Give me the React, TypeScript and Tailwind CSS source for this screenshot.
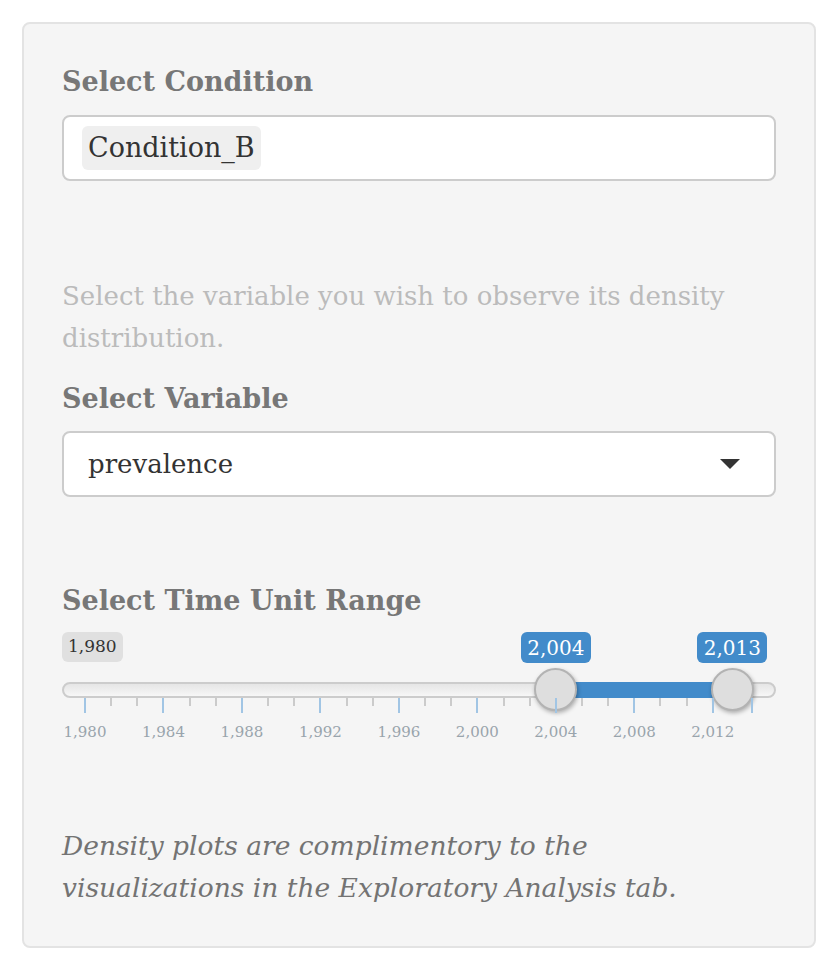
const serif = "font-['DejaVu_Serif',serif]";

const MIN = 1980;
const MAX = 2014;
const FROM = 2004;
const TO = 2013;
const YEAR_PX = 667 / (MAX - MIN);
const pos = (v: number) => 23 + (v - MIN) * YEAR_PX;

const majors = [1980, 1984, 1988, 1992, 1996, 2000, 2004, 2008, 2012];
const minors = majors.slice(0, -1).flatMap(m => [m + 4 / 3, m + 8 / 3]);

function Label({ children }: { children: React.ReactNode }) {
  return <div className="h-[40px] text-[27px] font-bold leading-[40px] text-[#777]">{children}</div>;
}

function RangeSlider() {
  return (
    <div className="flex flex-col pt-[11px]">
      {/* labels above the track */}
      <div className="relative h-[31px]">
        <span className="inline-flex h-[30px] items-center rounded-[6px] bg-[#e0e0e0] px-[6px] text-[17px] text-[#333]">
          1,980
        </span>
        {[FROM, TO].map(v => (
          <div
            key={v}
            className="absolute top-0 flex h-[31px] w-[70px] items-center justify-center rounded-[6px] bg-[#428bca] text-[20px] text-white"
            style={{ left: pos(v) - 35 }}
          >
            {v.toLocaleString("en-US")}
          </div>
        ))}
      </div>

      {/* track, bar, handles */}
      <div className="relative mt-[19px] h-[16px]">
        <div className="h-full rounded-full border-2 border-[#ccc] bg-[linear-gradient(to_bottom,#ddd_-50%,#fff_150%)]" />
        <div
          className="absolute top-0 h-[16px] bg-[#428bca]"
          style={{ left: pos(FROM), width: pos(TO) - pos(FROM) }}
        />
        {[FROM, TO].map(v => (
          <div
            key={v}
            className="absolute top-[-14px] h-[43px] w-[43px] rounded-full border-2 border-[#b3b3b3] bg-[#dedede] shadow-[1px_2px_4px_rgba(0,0,0,0.3)]"
            style={{ left: pos(v) - 21.5 }}
          />
        ))}
      </div>

      {/* grid */}
      <div className="relative -z-0 h-[52px]">
        {majors.concat([MAX]).map(v => (
          <div key={v} className="absolute top-0 h-[15px] w-[2px] bg-[#a1c5e4]" style={{ left: pos(v) - 1 }} />
        ))}
        {minors.map(v => (
          <div key={v} className="absolute top-0 h-[8px] w-[2px] bg-[#cbcbcb]" style={{ left: pos(v) - 1 }} />
        ))}
        {majors.map(v => (
          <div
            key={v}
            className="absolute top-[23px] w-[60px] text-center text-[15px] leading-[22px] text-[#99a4ac]"
            style={{ left: pos(v) - 30 }}
          >
            {v.toLocaleString("en-US")}
          </div>
        ))}
      </div>
    </div>
  );
}

export default function App() {
  return (
    <div className={`min-h-screen bg-white pl-[22px] pt-[22px] ${serif}`}>
      <div className="w-[794px] rounded-[8px] border-2 border-[#e3e3e3] bg-[#f5f5f5] px-[38px] pb-[37px] pt-[38px]">
        <Label>Select Condition</Label>
        <div className="mt-[13px] flex h-[66px] items-center rounded-[8px] border-2 border-[#ccc] bg-white pl-[18px]">
          <span className="flex h-[44px] items-center rounded-[6px] bg-[#efefef] px-[6px] text-[27px] text-[#333]">
            Condition_B
          </span>
        </div>

        <p className="mt-[94px] text-[26px] leading-[42px] text-[#bbb]">
          Select the variable you wish to observe its density distribution.
        </p>

        <div className="mt-[20px]">
          <Label>Select Variable</Label>
        </div>
        <div className="mt-[12px] flex h-[66px] items-center justify-between rounded-[8px] border-2 border-[#ccc] bg-white pl-[24px] pr-[34px] text-[26px] text-[#333]">
          <span>prevalence</span>
          <svg width="20" height="10" viewBox="0 0 20 10">
            <polygon points="0,0 20,0 10,10" fill="#333" />
          </svg>
        </div>

        <div className="mt-[84px]">
          <Label>Select Time Unit Range</Label>
        </div>
        <RangeSlider />

        <p className="mt-[75px] text-[26.5px] italic leading-[42px] text-[#737373]">
          Density plots are complimentory to the
          <br />
          visualizations in the Exploratory Analysis tab.
        </p>
      </div>
    </div>
  );
}
